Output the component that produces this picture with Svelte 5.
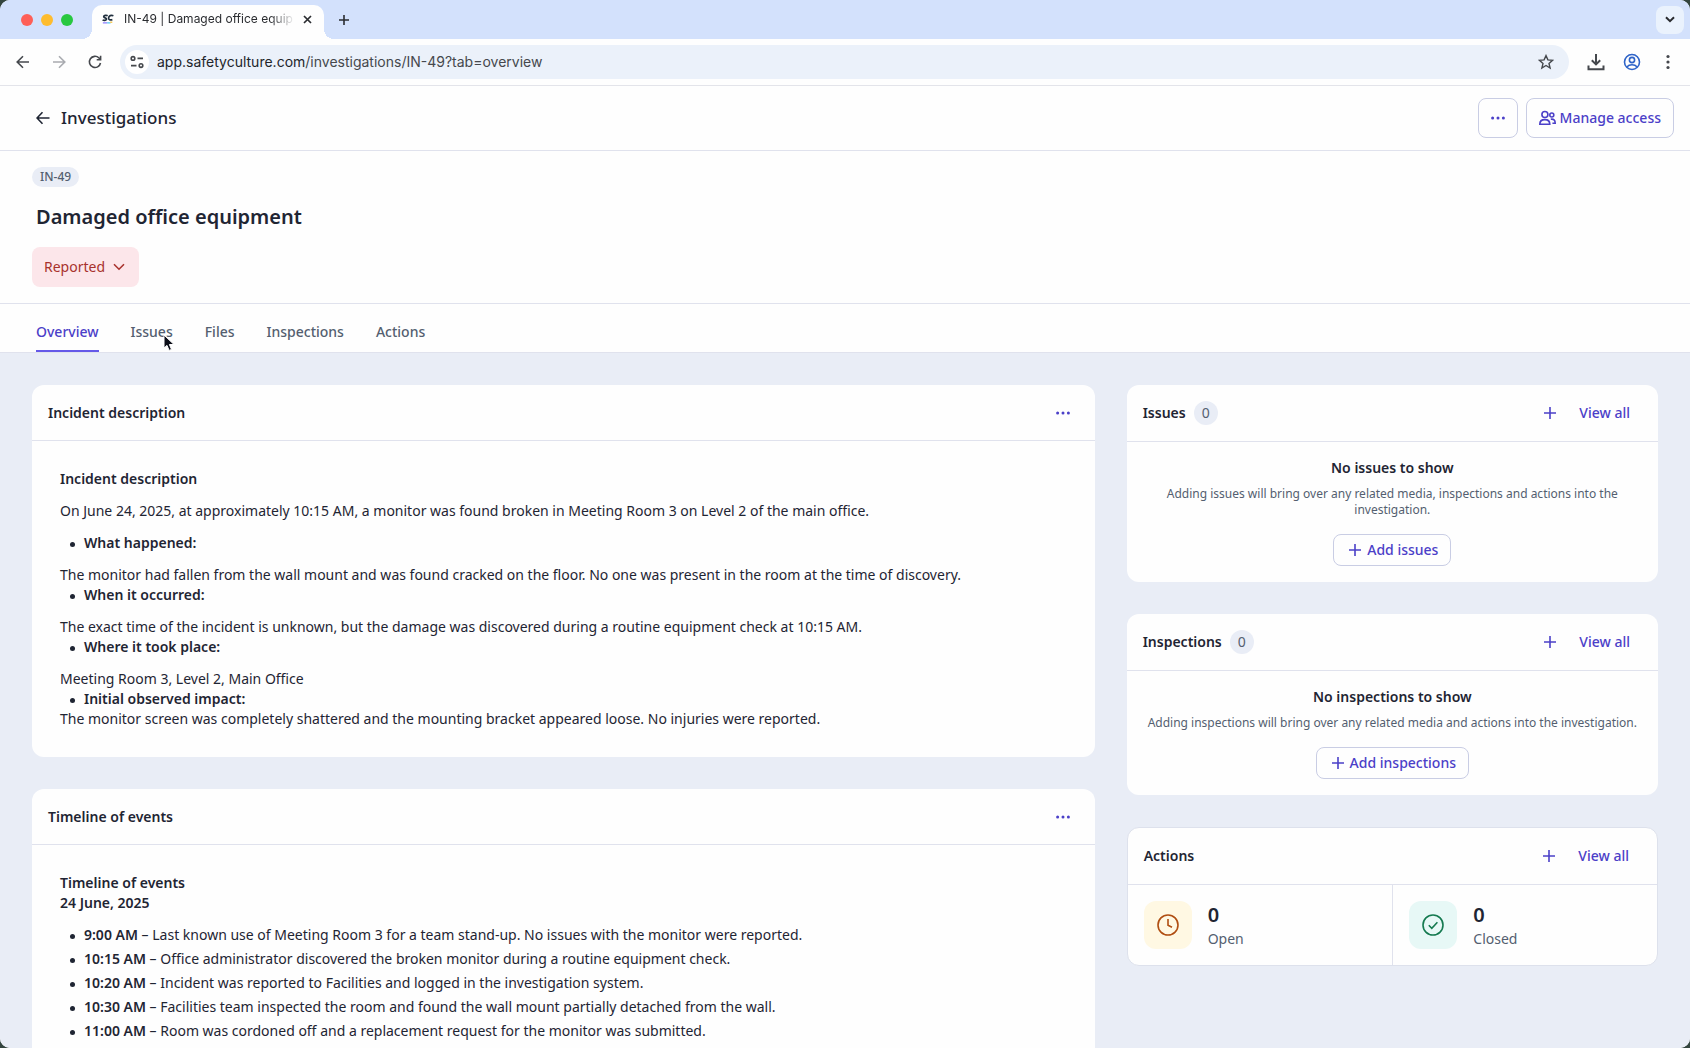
<script>
  const tabs = ['Overview', 'Issues', 'Files', 'Inspections', 'Actions'];
  let active = $state('Overview');

  const findings = [
    { label: 'What happened:', text: 'The monitor had fallen from the wall mount and was found cracked on the floor. No one was present in the room at the time of discovery.' },
    { label: 'When it occurred:', text: 'The exact time of the incident is unknown, but the damage was discovered during a routine equipment check at 10:15 AM.' },
    { label: 'Where it took place:', text: 'Meeting Room 3, Level 2, Main Office' },
    { label: 'Initial observed impact:', text: 'The monitor screen was completely shattered and the mounting bracket appeared loose. No injuries were reported.', tight: true }
  ];

  const events = [
    ['9:00 AM', 'Last known use of Meeting Room 3 for a team stand-up. No issues with the monitor were reported.'],
    ['10:15 AM', 'Office administrator discovered the broken monitor during a routine equipment check.'],
    ['10:20 AM', 'Incident was reported to Facilities and logged in the investigation system.'],
    ['10:30 AM', 'Facilities team inspected the room and found the wall mount partially detached from the wall.'],
    ['11:00 AM', 'Room was cordoned off and a replacement request for the monitor was submitted.']
  ];

  const linked = [
    { title: 'Issues', empty: 'No issues to show', hint: 'Adding issues will bring over any related media, inspections and actions into the investigation.', add: 'Add issues' },
    { title: 'Inspections', empty: 'No inspections to show', hint: 'Adding inspections will bring over any related media and actions into the investigation.', add: 'Add inspections' }
  ];
</script>

{#snippet dots()}
  <svg class="dots" viewBox="0 0 16 16" aria-hidden="true"><circle cx="2.6" cy="8" r="1.5" /><circle cx="8" cy="8" r="1.5" /><circle cx="13.4" cy="8" r="1.5" /></svg>
{/snippet}

{#snippet plus()}
  <svg class="line plus" viewBox="0 0 14 14" aria-hidden="true"><path d="M7 1v12M1 7h12" /></svg>
{/snippet}

<div class="window">
  <div class="strip">
    <div class="lights"><i class="red"></i><i class="amber"></i><i class="green"></i></div>
    <div class="browser-tab">
      <svg class="favicon" viewBox="0 0 14 12" aria-hidden="true">
        <path d="M6.6 2.2C5.600 1.500 2.300 1.300 2 3.200c-.2 1.700 3.600 1.200 3.300 3C5 8 2 8 .7 7" fill="none" stroke="#22303f" stroke-width="2" />
        <path d="M13.300 2.200C10.600 1 8 2.200 7.700 4.600c-.2 2.200 1.900 3 4.400 2.200" fill="none" stroke="#22303f" stroke-width="2" />
        <path d="M1 10.500h5" stroke="#8c7bff" stroke-width="1.500" /><path d="M6 10.500h4" stroke="#4fc7f2" stroke-width="1.500" /><path d="M9.500 9.800h2.500" stroke="#f6c95b" stroke-width="1.500" />
      </svg>
      <span class="tab-title">IN-49 | Damaged office equip</span>
      <button class="bare" aria-label="Close tab"><svg class="line" width="9" height="9" viewBox="0 0 9 9"><path d="M1 1l7 7M8 1l-7 7" stroke-width="1.700" /></svg></button>
    </div>
    <button class="bare new-tab" aria-label="New tab"><svg class="line" width="12" height="12" viewBox="0 0 12 12"><path d="M6 1v10M1 6h10" /></svg></button>
    <button class="bare tab-search" aria-label="Search tabs"><svg class="line" width="10" height="7" viewBox="0 0 10 7"><path d="M1 1.200l4 4 4-4" stroke-width="2" /></svg></button>
  </div>

  <div class="toolbar">
    <button class="bare" aria-label="Back"><svg class="line" width="14" height="14" viewBox="0 0 14 14"><path d="M13 7H1.500M7 1.200L1.200 7 7 12.800" /></svg></button>
    <button class="bare faded" aria-label="Forward"><svg class="line" width="14" height="14" viewBox="0 0 14 14"><path d="M1 7h11.500M7 1.200L12.800 7 7 12.800" /></svg></button>
    <button class="bare" aria-label="Reload"><svg class="line" width="14" height="14" viewBox="0 0 14 14"><path d="M12.500 8A5.600 5.600 0 1 1 11 3l1.300 1.300M12.600 .8v3.900H8.700" /></svg></button>
    <div class="address">
      <button class="bare site" aria-label="Site information">
        <svg class="line" width="14" height="14" viewBox="0 0 14 14"><circle cx="3" cy="3.400" r="1.800" /><path d="M7.500 3.400H13M1 10.600h5.500" /><circle cx="11" cy="10.600" r="1.800" /></svg>
      </button>
      <div class="url"><span>app.safetyculture.com</span>/investigations/IN-49?tab=overview</div>
      <button class="bare" aria-label="Bookmark this page"><svg class="line" width="16" height="16" viewBox="0 0 16 16"><path d="M8 1.600l1.900 4.300 4.700.4-3.600 3.100 1.100 4.600L8 11.500 3.900 14 5 9.400 1.400 6.300l4.700-.4z" stroke-width="1.400" /></svg></button>
    </div>
    <button class="bare" aria-label="Downloads"><svg class="line" width="18" height="18" viewBox="0 0 18 18"><path d="M9 1v10M4.800 7.200L9 11.400l4.200-4.200M1.500 12.500v3.700h15v-3.700" stroke-width="2" /></svg></button>
    <button class="bare profile" aria-label="Profile"><svg class="line" width="18" height="18" viewBox="0 0 18 18"><circle cx="9" cy="9" r="7.500" /><circle cx="9" cy="7" r="2.600" /><path d="M3.800 14c1.400-1.500 3.200-2.200 5.200-2.200s3.800.7 5.200 2.200" /></svg></button>
    <button class="bare" aria-label="Browser menu"><svg width="18" height="16" viewBox="0 0 18 16" fill="currentColor"><circle cx="9" cy="2.500" r="1.600" /><circle cx="9" cy="8" r="1.600" /><circle cx="9" cy="13.500" r="1.600" /></svg></button>
  </div>

  <header class="page-bar">
    <a class="back" href="#investigations">
      <svg class="line" width="14" height="14" viewBox="0 0 14 14" aria-hidden="true"><path d="M13.500 7H1.200M6.500 1.200L1 7l5.500 5.800" /></svg>
      Investigations
    </a>
    <button class="outline more" aria-label="More options">{@render dots()}</button>
    <button class="outline manage">
      <svg class="line" width="17" height="16" viewBox="0 0 17 16" aria-hidden="true"><circle cx="5.900" cy="4.500" r="3" /><path d="M.8 14.200c0-3 1.800-4.600 5-4.600s5 1.600 5 4.600z" /><circle cx="12.800" cy="5" r="2" /><path d="M11.800 9.200c2.800-.5 4.400 1 4.400 4h-2.800" /></svg>
      Manage access
    </button>
  </header>

  <section class="summary">
    <span class="badge">IN-49</span>
    <h1>Damaged office equipment</h1>
    <button class="status">Reported <svg class="line" width="12" height="8" viewBox="0 0 12 8" aria-hidden="true"><path d="M1 1.200l5 5 5-5" /></svg></button>
  </section>

  <nav class="tabs">
    {#each tabs as tab}
      <button class:active={tab === active} onclick={() => (active = tab)}>
        {tab}
        {#if tab === 'Issues'}
          <svg class="pointer" viewBox="0 0 12 18" aria-hidden="true"><path d="M1 1v13l3-2.600 2.100 5 2.400-1-2.100-4.900H11z" fill="#0b0d18" stroke="#fff" stroke-width="1" /></svg>
        {/if}
      </button>
    {/each}
  </nav>

  <main>
    <div class="column">
      <article class="card">
        <div class="card-head"><h2>Incident description</h2><button class="bare accent" aria-label="Incident description options">{@render dots()}</button></div>
        <div class="prose">
          <h3>Incident description</h3>
          <p class="lead">On June 24, 2025, at approximately 10:15 AM, a monitor was found broken in Meeting Room 3 on Level 2 of the main office.</p>
          {#each findings as item}
            <ul class:tight={item.tight}><li><b>{item.label}</b></li></ul>
            <p>{item.text}</p>
          {/each}
        </div>
      </article>

      <article class="card">
        <div class="card-head"><h2>Timeline of events</h2><button class="bare accent" aria-label="Timeline options">{@render dots()}</button></div>
        <div class="prose">
          <h3>Timeline of events</h3>
          <h3>24 June, 2025</h3>
          <ul class="events">
            {#each events as [time, text]}
              <li><b>{time}</b> – {text}</li>
            {/each}
          </ul>
        </div>
      </article>
    </div>

    <aside class="column">
      {#each linked as block}
        <section class="card">
          <div class="card-head side">
            <h2>{block.title}</h2><span class="count">0</span>
            <button class="bare accent add" aria-label={block.add}>{@render plus()}</button>
            <a href="#all">View all</a>
          </div>
          <div class="empty">
            <h3>{block.empty}</h3>
            <p>{block.hint}</p>
            <button class="outline small">{@render plus()}{block.add}</button>
          </div>
        </section>
      {/each}

      <section class="card bordered">
        <div class="card-head side">
          <h2>Actions</h2>
          <button class="bare accent add" aria-label="Add action">{@render plus()}</button>
          <a href="#all">View all</a>
        </div>
        <div class="stats">
          <div class="stat">
            <span class="tile open"><svg class="line" width="24" height="24" viewBox="0 0 24 24" aria-hidden="true"><circle cx="12" cy="12" r="10" /><path d="M12 6v6.300l4 2" /></svg></span>
            <div><strong>0</strong><span>Open</span></div>
          </div>
          <div class="stat">
            <span class="tile closed"><svg class="line" width="24" height="24" viewBox="0 0 24 24" aria-hidden="true"><circle cx="12" cy="12" r="10" /><path d="M7.800 12.300l3 3 5.600-6" /></svg></span>
            <div><strong>0</strong><span>Closed</span></div>
          </div>
        </div>
      </section>
    </aside>
  </main>
</div>

<style>
  :global(body) { background: #34453f; }
  * { box-sizing: border-box; }
  .window { height: 100vh; display: flex; flex-direction: column; overflow: hidden; border-radius: 10px; background: #fefefe; color: #1f2533; font-family: "Noto Sans", sans-serif; font-size: 14px; line-height: 20px; }
  button, a { font: inherit; color: inherit; text-decoration: none; cursor: pointer; }
  h1, h2, h3, p, ul { margin: 0; }
  .bare { display: flex; align-items: center; justify-content: center; padding: 0; border: 0; background: none; }
  .line { fill: none; stroke: currentColor; stroke-width: 1.6; flex: none; }
  .dots { width: 16px; height: 16px; fill: currentColor; }
  .plus { width: 14px; height: 14px; }

  .strip { flex: none; display: flex; align-items: center; height: 39px; padding: 0 6px 0 21px; background: #d3e1fc; font-family: Inter, sans-serif; font-size: 12px; color: #2a2c30; }
  .lights { display: flex; gap: 8px; width: 71px; }
  .lights i { width: 12px; height: 12px; border-radius: 50%; }
  .red { background: #fe5f57; }
  .amber { background: #febc2e; }
  .green { background: #28c840; }
  .browser-tab { position: relative; align-self: flex-end; display: flex; align-items: center; width: 232px; height: 34px; padding: 0 12px 6px 10px; border-radius: 10px 10px 0 0; background: #fefefe; }
  .browser-tab::before, .browser-tab::after { content: ''; position: absolute; bottom: 0; width: 10px; height: 10px; }
  .browser-tab::before { right: 100%; background: radial-gradient(circle at 0 0, #d3e1fc 10px, #fefefe 10px); }
  .browser-tab::after { left: 100%; background: radial-gradient(circle at 100% 0, #d3e1fc 10px, #fefefe 10px); }
  .favicon { width: 12px; height: 12px; flex: none; }
  .tab-title { flex: 1; margin: 0 8px 0 10px; white-space: nowrap; mask-image: linear-gradient(to right, #000 85%, transparent); }
  .new-tab { margin-left: 14px; }
  .tab-search { width: 28px; height: 28px; margin-left: auto; border-radius: 8px; background: #eaf2fd; }

  .toolbar { flex: none; display: flex; align-items: center; gap: 18px; height: 47px; padding: 0 13px 0 16px; border-bottom: 1px solid #e3e4ea; background: #fefefe; color: #45484d; }
  .toolbar > .bare:nth-child(-n + 2) { margin-right: 4px; }
  .faded { color: #a9abb0; }
  .address { flex: 1; display: flex; align-items: center; height: 34px; padding: 0 15px 0 5px; border-radius: 17px; background: #ebf1fa; }
  .site { width: 24px; height: 24px; border-radius: 50%; background: #fff; }
  .url { flex: 1; margin-left: 8px; font-family: Inter, sans-serif; color: #45484d; }
  .url span { color: #22252a; }
  .profile { color: #2f64c8; }

  .page-bar { flex: none; display: flex; align-items: center; gap: 8px; height: 65px; padding: 0 16px 0 36px; border-bottom: 1px solid #e0e2ed; }
  .back { display: flex; align-items: center; gap: 11px; margin-right: auto; font-size: 17px; font-weight: 500; }
  .outline { display: flex; align-items: center; justify-content: center; border: 1px solid #c9cde4; border-radius: 8px; background: #fefefe; color: #4b40c8; font-weight: 500; }
  .more { width: 40px; height: 40px; padding: 0; }
  .manage { gap: 4px; height: 40px; padding: 0 12px; }

  .summary { flex: none; display: flex; flex-direction: column; align-items: flex-start; padding: 16px 32px; border-bottom: 1px solid #e0e2ed; }
  .badge { padding: 0 8px; border-radius: 10px; background: #e9edf6; color: #545f70; font-size: 12px; font-weight: 500; }
  h1 { margin: 16px 4px; font-size: 20px; line-height: 28px; font-weight: 600; }
  .status { display: flex; align-items: center; gap: 8px; height: 40px; padding: 0 14px 0 12px; border: 0; border-radius: 8px; background: #fce6ea; color: #a8322d; }

  .tabs { flex: none; display: flex; gap: 32px; height: 49px; padding: 0 36px; border-bottom: 1px solid #e0e2ed; }
  .tabs button { position: relative; padding: 10px 0 0; border: 0; border-bottom: 2px solid transparent; background: none; color: #545f70; font-weight: 500; }
  .tabs .active { border-color: #6559e8; color: #4b40c8; }
  .pointer { position: absolute; left: 32px; top: 30px; width: 12px; height: 18px; }

  main { flex: 1; min-height: 0; display: grid; grid-template-columns: 2fr 1fr; gap: 32px; padding: 32px; overflow: hidden; background: #e9edf6; align-items: start; }
  .column { display: flex; flex-direction: column; gap: 32px; min-width: 0; }
  .card { border-radius: 12px; background: #fefefe; overflow: hidden; }
  .bordered { border: 1px solid #dde1ec; }
  .card-head { display: flex; align-items: center; height: 56px; padding: 0 24px 0 16px; border-bottom: 1px solid #e0e2ed; }
  .card-head h2, h3 { font-size: 14px; line-height: 20px; font-weight: 600; }
  .card-head .bare:first-of-type { margin-left: auto; }
  .accent, .card-head a { color: #4b40c8; font-weight: 500; }
  .side { height: 57px; padding-right: 28px; }
  .side .add { margin-right: 22px; }
  .count { margin-left: 8px; padding: 2px 8px; border-radius: 12px; background: #e9edf6; color: #545f70; }
  .prose { padding: 28px; }
  ul { padding-left: 24px; margin-bottom: 12px; list-style: none; }
  li::before { content: ''; display: inline-block; width: 5px; height: 5px; margin: 0 9px 0 -14px; border-radius: 50%; background: currentColor; vertical-align: middle; }
  ul.tight { margin-bottom: 0; }
  .lead { margin: 12px 0; }
  b { font-weight: 600; }
  .events { display: grid; gap: 4px; margin-top: 12px; }
  .empty { display: flex; flex-direction: column; align-items: center; padding: 16px; text-align: center; }
  .empty p { margin: 8px 0 16px; color: #545f70; font-size: 12px; line-height: 16px; }
  .small { gap: 5px; height: 32px; padding: 0 12px 0 14px; }
  .stats { display: grid; grid-template-columns: 1fr 1fr; }
  .stat { display: flex; align-items: center; gap: 16px; padding: 16px; }
  .stat + .stat { border-left: 1px solid #e0e2ed; }
  .stat strong { display: block; font-size: 20px; line-height: 28px; font-weight: 600; }
  .stat div span { color: #545f70; }
  .tile { display: flex; align-items: center; justify-content: center; width: 48px; height: 48px; border-radius: 12px; }
  .open { background: #fff8e3; color: #b04e12; }
  .closed { background: #e7f8f6; color: #157a50; }
</style>
